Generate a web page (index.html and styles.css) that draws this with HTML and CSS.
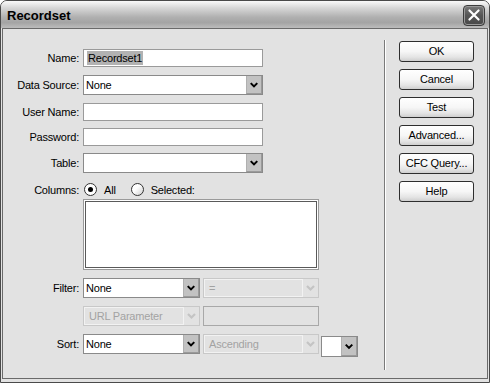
FILE: index.html
```html
<!DOCTYPE html>
<html lang="en">
  <head>
    <meta charset="UTF-8" />
    <meta name="viewport" content="width=device-width, initial-scale=1.0" />
    <title>Recordset</title>
    <link rel="stylesheet" href="styles.css">
  </head>
  <body>
    <div class="window">
      <div class="titlebar">
        <span class="title">Recordset</span>
        <div class="close">
          <svg width="22" height="21" viewBox="0 0 22 21">
            <path d="M6 5 L16 15 M16 5 L6 15" stroke="#fff" stroke-width="2.4" stroke-linecap="round" />
          </svg>
        </div>
      </div>

      <div class="frame">
        <div class="form">
          <div class="row r-name">
            <span class="label">Name:</span>
            <div class="field w-wide"><span class="hilite">Recordset1</span></div>
          </div>

          <div class="row r-source">
            <span class="label">Data Source:</span>
            <div class="select w-wide">
              <span class="value">None</span>
              <span class="arrow"><svg width="15" height="18" viewBox="0 0 15 18"><polyline points="4,7 7.5,10.5 11,7" fill="none" stroke="#000" stroke-width="2.2" /></svg></span>
            </div>
          </div>

          <div class="row r-user">
            <span class="label">User Name:</span>
            <div class="field w-wide"></div>
          </div>

          <div class="row r-pass">
            <span class="label">Password:</span>
            <div class="field w-wide"></div>
          </div>

          <div class="row r-table">
            <span class="label">Table:</span>
            <div class="select w-wide">
              <span class="value"></span>
              <span class="arrow"><svg width="15" height="18" viewBox="0 0 15 18"><polyline points="4,7 7.5,10.5 11,7" fill="none" stroke="#000" stroke-width="2.2" /></svg></span>
            </div>
          </div>

          <div class="row r-columns">
            <span class="label">Columns:</span>
            <span class="radio on"></span>
            <span class="radio-text">All</span>
            <span class="radio"></span>
            <span class="radio-text">Selected:</span>
          </div>

          <div class="row r-list">
            <span class="label"></span>
            <div class="listbox"></div>
          </div>

          <div class="row r-filter">
            <span class="label">Filter:</span>
            <div class="select w-half">
              <span class="value">None</span>
              <span class="arrow"><svg width="15" height="18" viewBox="0 0 15 18"><polyline points="4,7 7.5,10.5 11,7" fill="none" stroke="#000" stroke-width="2.2" /></svg></span>
            </div>
            <div class="select w-half2 off">
              <span class="value">=</span>
              <span class="arrow"><svg width="15" height="18" viewBox="0 0 15 18"><polyline points="4,7 7.5,10.5 11,7" fill="none" stroke="#c4c4c4" stroke-width="2.2" /></svg></span>
            </div>
          </div>

          <div class="row r-url">
            <span class="label"></span>
            <div class="select w-half off">
              <span class="value">URL Parameter</span>
              <span class="arrow"><svg width="15" height="18" viewBox="0 0 15 18"><polyline points="4,7 7.5,10.5 11,7" fill="none" stroke="#c4c4c4" stroke-width="2.2" /></svg></span>
            </div>
            <div class="field w-half2 off"></div>
          </div>

          <div class="row r-sort">
            <span class="label">Sort:</span>
            <div class="select w-half">
              <span class="value">None</span>
              <span class="arrow"><svg width="15" height="18" viewBox="0 0 15 18"><polyline points="4,7 7.5,10.5 11,7" fill="none" stroke="#000" stroke-width="2.2" /></svg></span>
            </div>
            <div class="select w-half2 off">
              <span class="value">Ascending</span>
              <span class="arrow"><svg width="15" height="18" viewBox="0 0 15 18"><polyline points="4,7 7.5,10.5 11,7" fill="none" stroke="#c4c4c4" stroke-width="2.2" /></svg></span>
            </div>
            <div class="select w-tiny">
              <span class="value"></span>
              <span class="arrow"><svg width="15" height="19" viewBox="0 0 15 19"><polyline points="4,7.5 7.5,11 11,7.5" fill="none" stroke="#000" stroke-width="2.2" /></svg></span>
            </div>
          </div>
        </div>

        <div class="sep"></div>

        <div class="buttons">
          <div class="btn">OK</div>
          <div class="btn">Cancel</div>
          <div class="btn">Test</div>
          <div class="btn">Advanced...</div>
          <div class="btn">CFC Query...</div>
          <div class="btn">Help</div>
        </div>
      </div>
    </div>
  </body>
</html>
```

FILE: styles.css
```css
* {
  box-sizing: border-box;
}
body {
  margin: 0;
  padding: 0;
  background-color: #fff;
  font-family: "Liberation Sans", Arial, sans-serif;
  font-size: 11px;
  letter-spacing: -0.2px;
  color: #000;
}
.window {
  width: 490px;
  height: 383px;
  border: 1px solid #4a4a4a;
  border-radius: 7px 7px 0 0;
  overflow: hidden;
  display: flex;
  flex-direction: column;
  background-color: #e2e2e2;
}
.titlebar {
  height: 27px;
  display: flex;
  align-items: center;
  justify-content: space-between;
  padding: 0 4px 0 6px;
  background: linear-gradient(#fafafa, #d8d8d8 25%, #b0b0b0 60%, #a4a4a4 80%, #bcbcbc);
}
.title {
  font-size: 13px;
  font-weight: bold;
  letter-spacing: 0;
  margin-top: 1px;
}
.close {
  width: 22px;
  height: 21px;
  margin-top: 2px;
  border: 1px solid #3c3c3c;
  border-radius: 4px;
  background: linear-gradient(#7a7a7a, #555 50%, #4a4a4a);
  box-shadow: inset 0 0 0 1px #9a9a9a;
  display: flex;
  align-items: center;
  justify-content: center;
}
.close svg {
  display: block;
}
.frame {
  flex: 1;
  display: flex;
  margin: 0 1px 3px 1px;
  border: 1px solid #6a6a6a;
  background-color: #e2e2e2;
}
.form {
  width: 381px;
  padding-top: 20px;
}
.row {
  display: flex;
  align-items: center;
}
.label {
  width: 76px;
  margin-right: 4px;
  text-align: right;
  flex-shrink: 0;
}
.r-source { margin-top: 8px; }
.r-user { margin-top: 8px; }
.r-pass { margin-top: 7px; }
.r-table { margin-top: 7px; }
.r-columns { margin-top: 10px; height: 13px; }
.r-list { margin-top: 3px; }
.r-filter { margin-top: 8px; }
.r-url { margin-top: 8px; }
.r-sort { margin-top: 8px; align-items: flex-start; }
.r-sort .label { line-height: 20px; }

.field {
  height: 18px;
  background-color: #fff;
  border: 1px solid #9a9a9a;
  padding: 1px 3px;
  line-height: 14px;
}
.field.off {
  background-color: #e2e2e2;
  border-color: #a8a8a8;
  height: 20px;
}
.hilite {
  display: inline-block;
  background-color: #b2b2b2;
  padding: 0 1px;
}
.w-wide { width: 180px; }
.w-half { width: 117px; }
.w-half2 { width: 116px; margin-left: 3px; }
.w-tiny { width: 37px; height: 21px !important; margin-left: 2px; margin-top: 2px; }

.select {
  height: 20px;
  display: flex;
  background-color: #fff;
  border: 1px solid #8a8a8a;
}
.select .value {
  flex: 1;
  padding-left: 2px;
  line-height: 18px;
}
.select .arrow {
  width: 16px;
  background-color: #c2c2c2;
  border-left: 1px solid #b0b0b0;
  border-right: 1px solid #9a9a9a;
  border-bottom: 1px solid #9a9a9a;
  display: flex;
  align-items: center;
  justify-content: center;
}
.select .arrow svg {
  display: block;
}
.select.off {
  background-color: #e2e2e2;
  border-color: #c8c8c8;
  box-shadow: inset 0 0 0 1px #f2f2f2;
  color: #a2a2a2;
}
.select.off .value {
  padding-left: 5px;
}
.select.off .arrow {
  background-color: #e2e2e2;
  border: none;
  border-left: 1px solid #f2f2f2;
}

.radio {
  width: 13px;
  height: 13px;
  border: 1px solid #333;
  border-radius: 50%;
  background: linear-gradient(135deg, #fff 40%, #cfcfcf);
  margin-left: 1px;
  display: flex;
  align-items: center;
  justify-content: center;
}
.radio.on {
  background: #fff;
}
.radio.on::after {
  content: "";
  width: 5px;
  height: 5px;
  border-radius: 50%;
  background-color: #000;
}
.radio-text {
  margin-left: 7px;
  margin-right: 14px;
}

.listbox {
  width: 236px;
  height: 71px;
  background-color: #fff;
  border: 1px solid #9a9a9a;
  box-shadow: inset 0 0 0 1px #fff, inset 0 0 0 2px #5a5a5a;
}

.sep {
  width: 2px;
  margin: 11px 0 8px 0;
  border-left: 1px solid #7a7a7a;
  border-right: 1px solid #fff;
}
.buttons {
  margin-left: 13px;
  padding-top: 12px;
  display: flex;
  flex-direction: column;
  gap: 7px;
}
.btn {
  width: 75px;
  height: 21px;
  border: 1px solid #2e2e2e;
  border-radius: 3px;
  background: linear-gradient(#ffffff, #f6f6f6 50%, #e4e4e4 80%, #cfcfcf);
  text-align: center;
  line-height: 19px;
}
```
